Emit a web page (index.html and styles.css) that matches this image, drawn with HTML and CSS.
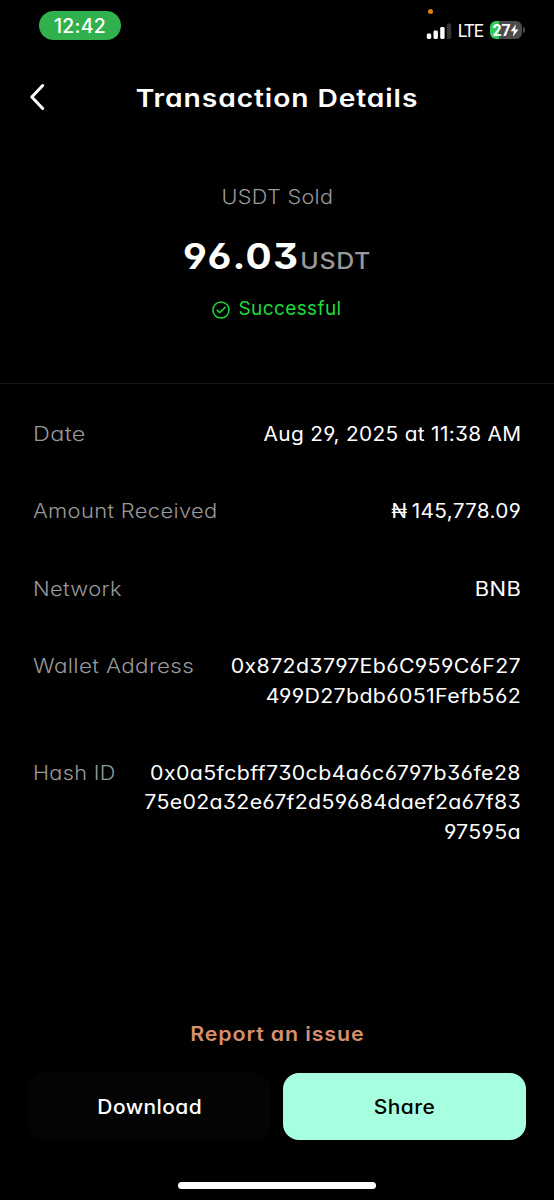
FILE: index.html
```html
<!DOCTYPE html>
<html lang="en">
<head>
    <meta charset="UTF-8">
    <meta name="viewport" content="width=device-width, initial-scale=1.0">
    <title>Transaction Details</title>
    <link rel="stylesheet" href="styles.css">
</head>
<body>
    <div class="screen">
        <!-- Status bar -->
        <div class="status-bar">
            <div class="time">12:42</div>
            <div class="status-icons">
                <span class="mic-dot"></span>
                <svg class="signal" width="26" height="17" viewBox="0 0 26 17">
                    <rect x="0.8" y="10.5" width="4.4" height="5.5" rx="1.4" fill="#fff"/>
                    <rect x="7.5" y="7.5" width="4.4" height="8.5" rx="1.4" fill="#fff"/>
                    <rect x="14.2" y="4" width="4.4" height="12" rx="1.4" fill="#fff"/>
                    <rect x="20.8" y="0.5" width="4.4" height="15.5" rx="1.4" fill="#333"/>
                </svg>
                <span class="lte">LTE</span>
                <div class="battery">
                    <span class="battery-level">27</span>
                    <svg width="9" height="13" viewBox="0 0 8 12">
                        <path d="M5.3 0.3L0.4 6.8h3L2.5 11.8L7.7 5.1H4.6z" fill="#fff"/>
                    </svg>
                </div>
                <span class="battery-cap"></span>
            </div>
        </div>

        <!-- Header -->
        <div class="header">
            <svg class="back" width="18" height="28" viewBox="0 0 18 28">
                <path d="M14.7 2.5L3.8 14L14.7 25.5" fill="none" stroke="#fff" stroke-width="3" stroke-linecap="round" stroke-linejoin="round"/>
            </svg>
            <h1>Transaction Details</h1>
        </div>

        <!-- Amount summary -->
        <div class="summary">
            <p class="summary-label">USDT Sold</p>
            <p class="amount">96.03<span class="currency">USDT</span></p>
            <p class="status">
                <svg width="18" height="18" viewBox="0 0 18 18" fill="none" stroke="#1fdc35" stroke-width="1.5" stroke-linecap="round" stroke-linejoin="round">
                    <circle cx="9" cy="9" r="8"/>
                    <path d="M5.2 9.2l2.5 2.6l5.4-5.4"/>
                </svg>
                <span>Successful</span>
            </p>
        </div>

        <!-- Details -->
        <div class="details">
            <div class="row">
                <span class="label label-date">Date</span>
                <span class="value value-date">Aug 29, 2025 at 11:38 AM</span>
            </div>
            <div class="row">
                <span class="label">Amount Received</span>
                <span class="value value-amount"><span class="naira-sign">₦</span>145,778.09</span>
            </div>
            <div class="row">
                <span class="label">Network</span>
                <span class="value value-network">BNB</span>
            </div>
            <div class="row">
                <span class="label label-wallet">Wallet Address</span>
                <span class="value">0x872d3797Eb6C959C6F27<br>499D27bdb6051Fefb562</span>
            </div>
            <div class="row">
                <span class="label label-hash">Hash ID</span>
                <span class="value"><span class="hash-start">0x0a5fcbff730cb4a6c6797b36fe28</span><br><span class="hash-middle">75e02a32e67f2d59684daef2a67f83</span><br>97595a</span>
            </div>
        </div>

        <!-- Actions -->
        <div class="footer">
            <a class="report">Report an issue</a>
            <div class="buttons">
                <button type="button" class="btn btn-download"><span>Download</span></button>
                <button type="button" class="btn btn-share"><span>Share</span></button>
            </div>
            <div class="home-bar"></div>
        </div>
    </div>
</body>
</html>
```
FILE: styles.css
```css
body, h1, p, button {
    margin: 0;
    padding: 0;
    box-sizing: border-box;
}

body {
    background-color: #000;
    color: #fff;
    font-family: Inter, "Liberation Sans", sans-serif;
    /* single-storey a, flat-top 3, open 6 and 9 */
    font-feature-settings: "cv11", "cv09", "cv03", "cv04";
}

.screen {
    height: 1200px;
    display: flex;
    flex-direction: column;
    overflow: hidden;
}

/* Status bar */
.status-bar {
    height: 60px;
    display: flex;
    justify-content: space-between;
    align-items: flex-start;
    padding: 11px 29px 0 39px;
    box-sizing: border-box;
}

.time {
    width: 82px;
    height: 29px;
    border-radius: 15px;
    background-color: #30b14d;
    font-size: 19.5px;
    font-weight: 450;
    line-height: 30px;
    text-align: center;
    letter-spacing: 0.2px;
    font-feature-settings: normal;
}

.status-icons {
    position: relative;
    display: flex;
    align-items: center;
    margin-top: 9px;
    height: 20px;
    font-feature-settings: normal;
}

.signal {
    margin-top: 2px;
}

.mic-dot {
    position: absolute;
    left: 2px;
    top: -11px;
    width: 5px;
    height: 5px;
    border-radius: 50%;
    background-color: #d9820f;
}

.lte {
    margin: 2px 7px 0 6px;
    font-family: Roboto, sans-serif;
    font-size: 17.5px;
    letter-spacing: -0.7px;
}

.battery {
    width: 32px;
    height: 18px;
    border-radius: 6px;
    background: linear-gradient(to right, #34c759 9px, #4b4b4d 9px);
    display: flex;
    justify-content: center;
    align-items: center;
}

.battery-level {
    font-family: Roboto, sans-serif;
    font-size: 16px;
    font-weight: 700;
    letter-spacing: -0.2px;
}

.battery-cap {
    width: 2px;
    height: 6px;
    margin-left: 1px;
    border-radius: 0 2px 2px 0;
    background-color: #4b4b4d;
}

/* Header */
.header {
    height: 74px;
    display: grid;
    grid-template-columns: 50px 1fr 50px;
    align-items: center;
}

.back {
    margin-left: 28px;
}

h1 {
    padding-top: 1px;
    font-size: 24.5px;
    font-weight: 600;
    letter-spacing: 0.8px;
    text-align: center;
    transform: scaleX(1.15);
}

/* Summary */
.summary {
    height: 250px;
    box-sizing: border-box;
    border-bottom: 1px solid #161616;
    padding-top: 48px;
    display: flex;
    flex-direction: column;
    align-items: center;
    margin-bottom: 36px;
}

.summary-label {
    color: #999;
    font-size: 19.5px;
    font-weight: 300;
    line-height: 30px;
    letter-spacing: 0.3px;
    transform: scaleX(1.11);
}

.amount {
    margin-top: 22px;
    font-size: 35px;
    font-weight: 700;
    line-height: 44px;
    letter-spacing: 1.1px;
    transform: scaleX(1.107);
}

.currency {
    margin-left: 1px;
    color: #999;
    font-size: 22.5px;
    font-weight: 550;
    letter-spacing: 0.6px;
}

.status {
    margin-top: 11px;
    display: flex;
    align-items: center;
    gap: 8px;
    color: #1fdc35;
    font-size: 19px;
    line-height: 30px;
    letter-spacing: 0.4px;
}

.status svg {
    margin-top: 1px;
}

/* Details */
.details {
    display: flex;
    flex-direction: column;
    gap: 48px;
    padding: 0 33px;
}

.row {
    display: flex;
    justify-content: space-between;
    font-size: 19.5px;
    line-height: 29.4px;
    letter-spacing: 0.3px;
}

.label {
    color: #999;
    font-weight: 300;
    transform: scaleX(1.125);
    transform-origin: left;
}

.label-date {
    transform: scaleX(1.2);
}

.label-wallet {
    transform: scaleX(1.15);
}

.label-hash {
    transform: scaleX(1.11);
}

.value {
    font-weight: 380;
    text-align: right;
    transform: scaleX(1.095);
    transform-origin: right;
}

.value-date {
    transform: scaleX(1.068);
}

.value-amount {
    transform: scaleX(1.063);
}

.value-network {
    transform: scaleX(1.127);
}

.hash-start {
    letter-spacing: 0.35px;
}

.hash-middle {
    letter-spacing: 0.25px;
}

.naira-sign {
    margin-right: 4px;
}

/* Footer */
.footer {
    margin-top: auto;
    display: flex;
    flex-direction: column;
    align-items: center;
    padding: 0 28px 11px;
}

.report {
    color: #d6906e;
    font-size: 20px;
    font-weight: 600;
    line-height: 30px;
    letter-spacing: 0.8px;
    transform: scaleX(1.07);
}

.buttons {
    align-self: stretch;
    display: grid;
    grid-template-columns: 1fr 1fr;
    gap: 12px;
    margin: 24px 0 42px;
}

.btn {
    height: 67px;
    border: none;
    border-radius: 16px;
    font-family: inherit;
    font-feature-settings: inherit;
    font-size: 19.5px;
    font-weight: 500;
    letter-spacing: 0.4px;
}

.btn span {
    display: inline-block;
    transform: scaleX(1.075);
}

.btn-download {
    background-color: #040404;
    color: #fff;
}

.btn-share {
    background-color: #a6ffde;
    color: #000;
}

.home-bar {
    width: 198px;
    height: 7px;
    border-radius: 4px;
    background-color: #fff;
}
```
